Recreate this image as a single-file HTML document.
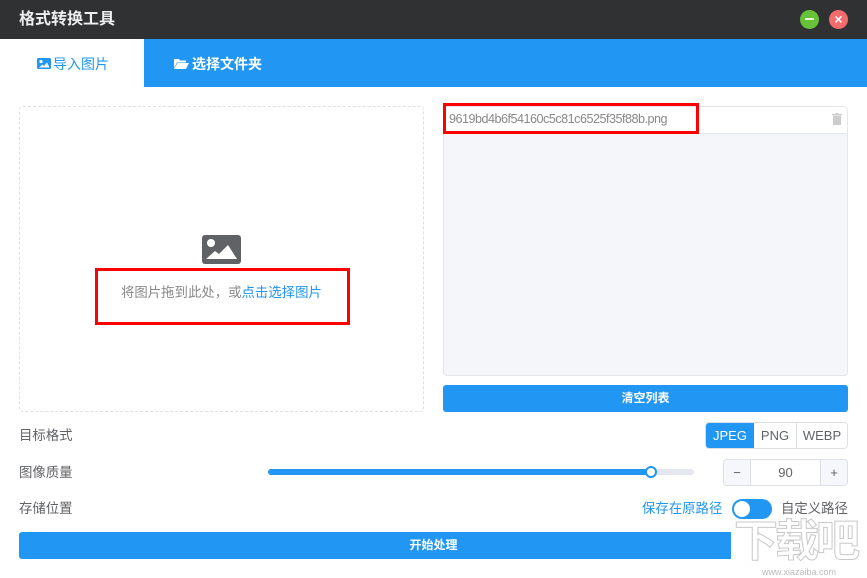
<!DOCTYPE html>
<html><head><meta charset="utf-8"><style>
*{margin:0;padding:0;box-sizing:border-box}
body{width:867px;height:578px;background:#fff;font-family:"Liberation Sans","Noto Sans CJK SC",sans-serif;position:relative;overflow:hidden;font-size:13px;color:#606266}
.a{position:absolute;line-height:1;white-space:nowrap}
</style></head><body>
<div class="a" style="left:0;top:0;width:867px;height:39px;background:#303133"></div>
<div class="a" style="left:19px;top:12px;color:#eee;font-size:16px;font-weight:bold">格式转换工具</div>
<div class="a" style="left:800px;top:10px;width:19px;height:19px;border-radius:50%;background:#67c23a"></div>
<div class="a" style="left:805px;top:18px;width:9px;height:2px;background:#e6f5dc"></div>
<div class="a" style="left:829px;top:10px;width:19px;height:19px;border-radius:50%;background:#f56c6c;color:#fff;font-size:14px;line-height:19px;text-align:center;font-weight:bold">×</div>
<div class="a" style="left:0;top:39px;width:867px;height:48px;background:#2196f3"></div>
<div class="a" style="left:0;top:39px;width:144px;height:48px;background:#fff"></div>
<svg class="a" style="left:37px;top:58px" width="14" height="11" viewBox="0 0 14 11"><rect width="14" height="11" rx="1.5" fill="#2196f3"/><circle cx="4" cy="3.5" r="1.6" fill="#fff"/><path d="M2 9.5L5.5 6.5 7 8 10 4.5 12.5 9.5Z" fill="#fff"/></svg>
<div class="a" style="left:53px;top:57px;color:#2196f3;font-size:14px">导入图片</div>
<svg class="a" style="left:174px;top:58px" width="15" height="11" viewBox="0 0 15 11"><path d="M0 1h5l1 1.5h6v2H3L0 10Z" fill="#fff"/><path d="M3.5 5H15l-3 6H0Z" fill="#fff"/></svg>
<div class="a" style="left:192px;top:57px;color:#fff;font-size:14px;font-weight:bold">选择文件夹</div>

<div class="a" style="left:19px;top:106px;width:405px;height:306px;border:1px dashed #dcdfe6;border-radius:4px"></div>
<svg class="a" style="left:202px;top:235px" width="39" height="29" viewBox="0 0 39 29"><rect width="39" height="29" rx="3" fill="#606266"/><circle cx="9" cy="8" r="4" fill="#fff"/><path d="M4 24L13 16 17 19 26 10 35 24Z" fill="#fff"/></svg>
<div class="a" style="left:121px;top:286px;font-size:13.4px;color:#888">将图片拖到此处，或<span style="color:#2196f3">点击选择图片</span></div>
<div class="a" style="left:95px;top:268px;width:255px;height:57px;border:3px solid #f00"></div>

<div class="a" style="left:443px;top:106px;width:405px;height:270px;border:1px solid #e4e7ed;border-radius:4px;background:#f5f6fa;overflow:hidden"><div style="height:27px;background:#fff;border-bottom:1px solid #e4e7ed"></div></div>
<div class="a" style="left:449px;top:113px;font-size:12.6px;color:#888;letter-spacing:-0.5px">9619bd4b6f54160c5c81c6525f35f88b.png</div>
<svg class="a" style="left:832px;top:113px" width="10" height="12" viewBox="0 0 10 12"><rect x="0" y="1" width="10" height="1.5" fill="#ccc"/><rect x="3.5" y="0" width="3" height="1.5" fill="#ccc"/><rect x="1" y="3" width="8" height="9" fill="#ccc"/></svg>
<div class="a" style="left:443px;top:103px;width:256px;height:31px;border:3px solid #f00"></div>

<div class="a" style="left:443px;top:385px;width:405px;height:27px;background:#2196f3;border-radius:3px;color:#fff;font-size:12px;font-weight:bold;text-align:center;line-height:27px">清空列表</div>

<div class="a" style="left:19px;top:429px;font-size:13.4px">目标格式</div>
<div class="a" style="left:705px;top:422px;width:143px;height:27px;border:1px solid #dcdfe6;border-radius:4px;overflow:hidden;display:flex;font-size:13px;line-height:25px;text-align:center">
<div style="width:48px;background:#2196f3;color:#fff">JPEG</div><div style="width:43px;border-right:1px solid #dcdfe6">PNG</div><div style="flex:1">WEBP</div></div>

<div class="a" style="left:19px;top:466px;font-size:13.4px">图像质量</div>
<div class="a" style="left:268px;top:469px;width:426px;height:6px;border-radius:3px;background:#e4e7ed"></div>
<div class="a" style="left:268px;top:469px;width:383px;height:6px;border-radius:3px;background:#2196f3"></div>
<div class="a" style="left:645px;top:466px;width:12px;height:12px;border-radius:50%;background:#fff;border:2px solid #2196f3"></div>
<div class="a" style="left:723px;top:459px;width:125px;height:27px;border:1px solid #dcdfe6;border-radius:4px;overflow:hidden;display:flex;line-height:25px;text-align:center">
<div style="width:27px;background:#f5f7fa;border-right:1px solid #dcdfe6">−</div><div style="flex:1;color:#606266">90</div><div style="width:27px;background:#f5f7fa;border-left:1px solid #dcdfe6">+</div></div>

<div class="a" style="left:19px;top:502px;font-size:13.4px">存储位置</div>
<div class="a" style="left:642px;top:502px;font-size:13.4px;color:#2196f3">保存在原路径</div>
<div class="a" style="left:732px;top:499px;width:40px;height:20px;border-radius:10px;background:#2196f3"></div>
<div class="a" style="left:734px;top:501px;width:16px;height:16px;border-radius:50%;background:#fff"></div>
<div class="a" style="left:781px;top:502px;font-size:13.4px;color:#606266">自定义路径</div>

<div class="a" style="left:19px;top:532px;width:829px;height:27px;background:#2196f3;border-radius:3px;color:#fff;font-size:12px;font-weight:bold;line-height:27px;text-align:center">开始处理</div>
<div class="a" style="left:731px;top:520px;width:136px;height:58px;background:#fff"></div>
<div class="a" style="left:734px;top:520px;font-size:44px;font-weight:bold;color:#fff;-webkit-text-stroke:1px #c8c8c8;letter-spacing:-3px">下载吧</div>
<div class="a" style="left:762px;top:568px;font-size:9px;color:#bbb">www.xiazaiba.com</div>
</body></html>
